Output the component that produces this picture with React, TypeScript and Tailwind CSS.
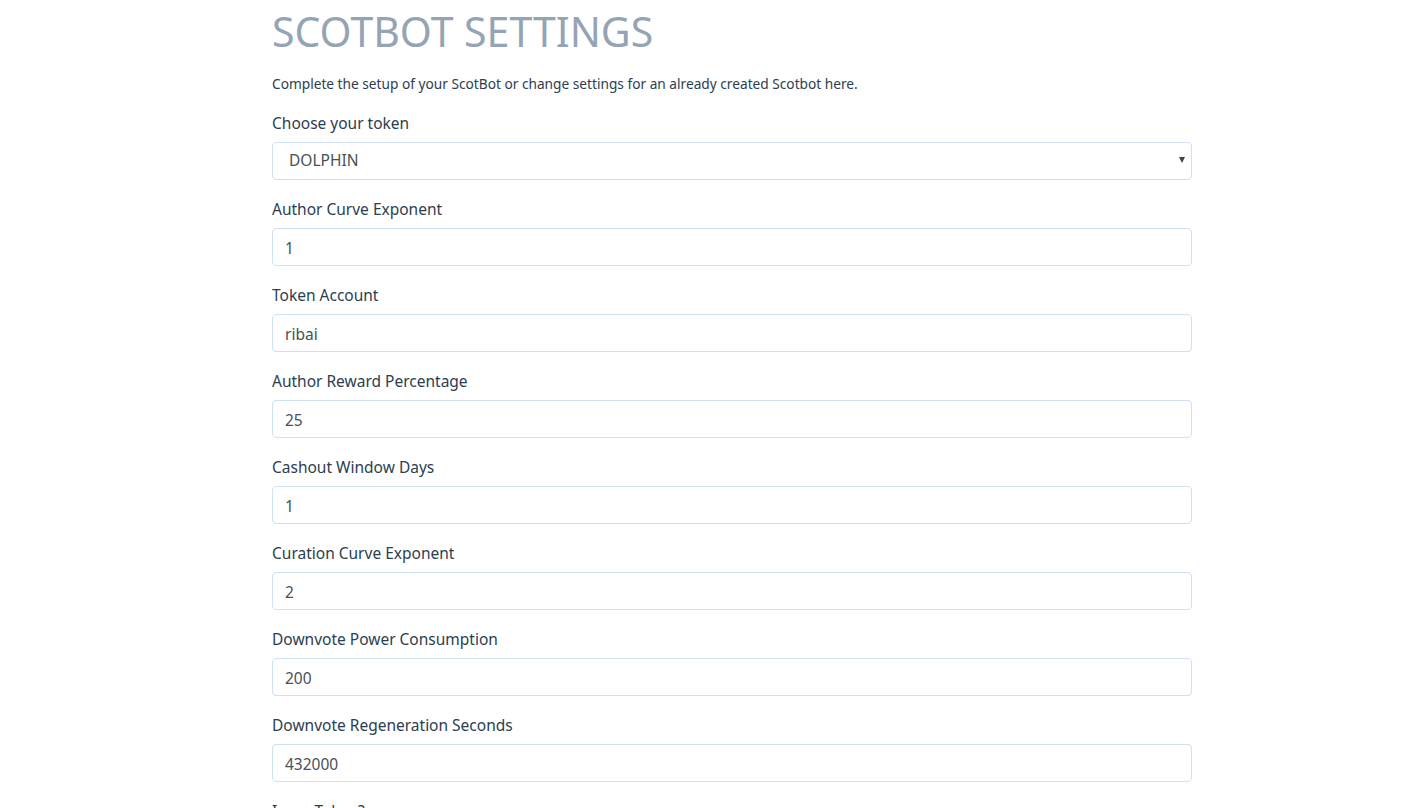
import React from "react";

const fields = [
  { label: "Author Curve Exponent", value: "1" },
  { label: "Token Account", value: "ribai" },
  { label: "Author Reward Percentage", value: "25" },
  { label: "Cashout Window Days", value: "1" },
  { label: "Curation Curve Exponent", value: "2" },
  { label: "Downvote Power Consumption", value: "200" },
  { label: "Downvote Regeneration Seconds", value: "432000" },
  { label: "Issue Token?", value: "true" },
];

const App = () => {
  return (
    <div className="min-h-screen bg-white font-['Noto_Sans',sans-serif] text-[#2c3e50]">
      <div className="w-[920px] ml-[272px] pt-[1px]">
        <h1 className="text-[41px] leading-[60px] text-[#94a4b5] font-normal tracking-normal">
          SCOTBOT SETTINGS
        </h1>
        <p className="text-[13.7px] leading-5 mt-[13px] mb-[17px]">
          Complete the setup of your ScotBot or change settings for an already
          created Scotbot here.
        </p>
        <div className="mb-[17px]">
          <label className="block text-[15.5px] leading-6 mb-[7px]">
            Choose your token
          </label>
          <div className="relative">
            <select className="w-full h-[38px] appearance-none rounded border border-[#cfe2f5] pl-4 pr-8 text-[15.5px] text-[#495057] bg-white">
              <option>DOLPHIN</option>
            </select>
            <span className="absolute right-[7px] top-[15px] w-0 h-0 border-l-[3.5px] border-r-[3.5px] border-t-[6px] border-l-transparent border-r-transparent border-t-[#444]" />
          </div>
        </div>
        {fields.map((f) => (
          <div key={f.label} className="mb-[17px]">
            <label className="block text-[15.5px] leading-6 mb-[7px]">
              {f.label}
            </label>
            <input
              className="w-full h-[38px] rounded border border-[#cfe2f5] px-3 pt-[1px] text-[15.5px] text-[#495057]"
              defaultValue={f.value}
            />
          </div>
        ))}
      </div>
    </div>
  );
};

export default App;
